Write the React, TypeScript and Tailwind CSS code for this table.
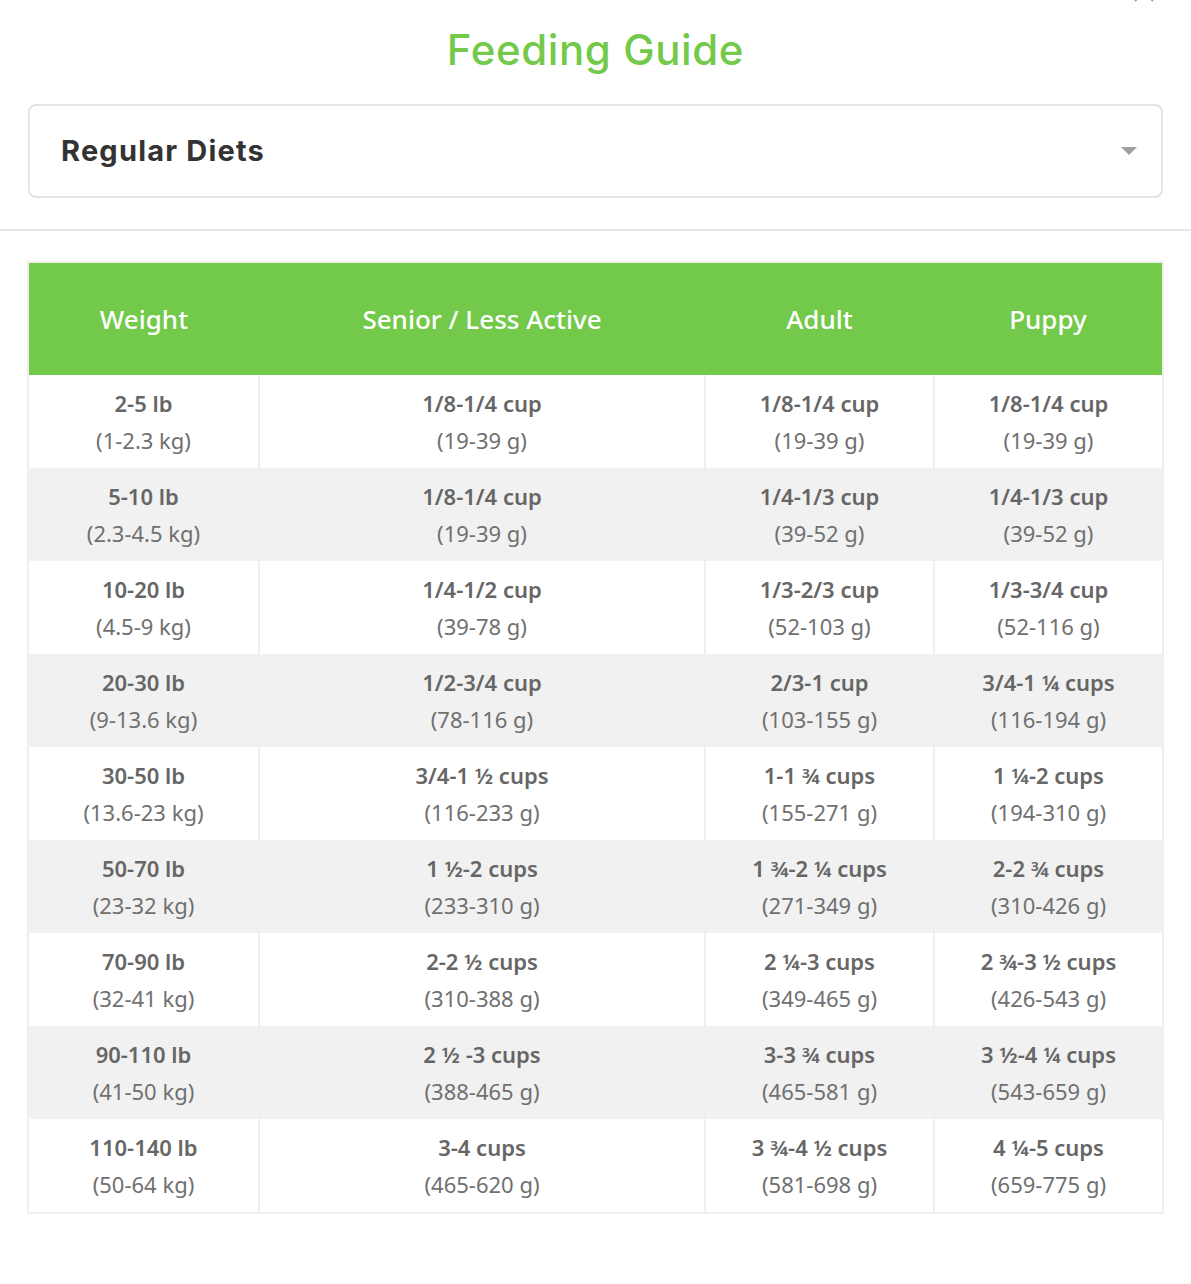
import { useState } from "react";

type Row = { weight: [string, string]; senior: [string, string]; adult: [string, string]; puppy: [string, string] };

const rows: Row[] = [
  { weight: ["2-5 lb", "(1-2.3 kg)"], senior: ["1/8-1/4 cup", "(19-39 g)"], adult: ["1/8-1/4 cup", "(19-39 g)"], puppy: ["1/8-1/4 cup", "(19-39 g)"] },
  { weight: ["5-10 lb", "(2.3-4.5 kg)"], senior: ["1/8-1/4 cup", "(19-39 g)"], adult: ["1/4-1/3 cup", "(39-52 g)"], puppy: ["1/4-1/3 cup", "(39-52 g)"] },
  { weight: ["10-20 lb", "(4.5-9 kg)"], senior: ["1/4-1/2 cup", "(39-78 g)"], adult: ["1/3-2/3 cup", "(52-103 g)"], puppy: ["1/3-3/4 cup", "(52-116 g)"] },
  { weight: ["20-30 lb", "(9-13.6 kg)"], senior: ["1/2-3/4 cup", "(78-116 g)"], adult: ["2/3-1 cup", "(103-155 g)"], puppy: ["3/4-1 ¼ cups", "(116-194 g)"] },
  { weight: ["30-50 lb", "(13.6-23 kg)"], senior: ["3/4-1 ½ cups", "(116-233 g)"], adult: ["1-1 ¾ cups", "(155-271 g)"], puppy: ["1 ¼-2 cups", "(194-310 g)"] },
  { weight: ["50-70 lb", "(23-32 kg)"], senior: ["1 ½-2 cups", "(233-310 g)"], adult: ["1 ¾-2 ¼ cups", "(271-349 g)"], puppy: ["2-2 ¾ cups", "(310-426 g)"] },
  { weight: ["70-90 lb", "(32-41 kg)"], senior: ["2-2 ½ cups", "(310-388 g)"], adult: ["2 ¼-3 cups", "(349-465 g)"], puppy: ["2 ¾-3 ½ cups", "(426-543 g)"] },
  { weight: ["90-110 lb", "(41-50 kg)"], senior: ["2 ½ -3 cups", "(388-465 g)"], adult: ["3-3 ¾ cups", "(465-581 g)"], puppy: ["3 ½-4 ¼ cups", "(543-659 g)"] },
  { weight: ["110-140 lb", "(50-64 kg)"], senior: ["3-4 cups", "(465-620 g)"], adult: ["3 ¾-4 ½ cups", "(581-698 g)"], puppy: ["4 ¼-5 cups", "(659-775 g)"] },
];

function Cell({ value, last }: { value: [string, string]; last?: boolean }) {
  return (
    <td className={`h-[93px] text-center align-middle ${last ? "" : "border-r-2 border-[#efefef]"}`}>
      <div className="text-[22px] leading-[37px] font-semibold text-[#666666]">{value[0]}</div>
      <div className="text-[22px] leading-[37px] text-[#707070]">{value[1]}</div>
    </td>
  );
}

export default function App() {
  const [diet] = useState("Regular Diets");

  return (
    <div className="relative min-h-[1284px] bg-white" style={{ fontFamily: "'Noto Sans', Lato, sans-serif" }}>
      {/* close button, mostly scrolled off the top */}
      <svg className="absolute right-[36px] top-[-19px]" width="22" height="22" viewBox="0 0 22 22" fill="none">
        <path d="M2 2 L20 20 M20 2 L2 20" stroke="#9a9a9a" strokeWidth="2" />
      </svg>

      <h1
        className="pt-[26px] text-center text-[42px] leading-[48px] font-medium tracking-[0.6px] text-[#72c94a]"
        style={{ fontFamily: "Inter, 'Noto Sans', sans-serif" }}
      >
        Feeding Guide
      </h1>

      <div className="mx-[28px] mt-[30px] flex h-[94px] items-center justify-between rounded-[8px] border-2 border-[#e4e4e4] pl-[31px] pr-[24px]">
        <span
          className="text-[29px] font-bold tracking-[1.2px] text-[#333333]"
          style={{ fontFamily: "Inter, 'Noto Sans', sans-serif" }}
        >
          {diet}
        </span>
        <svg width="16" height="8" viewBox="0 0 16 8">
          <path d="M0 0 H16 L8 8 Z" fill="#a0a0a0" />
        </svg>
      </div>

      <div className="mt-[31px] h-[2px] w-full bg-[#e6e6e6]" />

      <div className="mx-[27px] mt-[30px] border-2 border-[#efefef]">
        <table className="w-full table-fixed border-collapse">
          <colgroup>
            <col className="w-[230px]" />
            <col className="w-[446px]" />
            <col className="w-[229px]" />
            <col />
          </colgroup>
          <thead>
            <tr className="h-[112px] bg-[#72c94a]">
              {["Weight", "Senior / Less Active", "Adult", "Puppy"].map((h) => (
                <th key={h} className="text-center align-middle text-[26px] font-medium text-white">
                  {h}
                </th>
              ))}
            </tr>
          </thead>
          <tbody>
            {rows.map((r, i) => (
              <tr key={r.weight[0]} className={i % 2 === 1 ? "bg-[#f1f1f1]" : "bg-white"}>
                <Cell value={r.weight} />
                <Cell value={r.senior} />
                <Cell value={r.adult} />
                <Cell value={r.puppy} last />
              </tr>
            ))}
          </tbody>
        </table>
      </div>
    </div>
  );
}
